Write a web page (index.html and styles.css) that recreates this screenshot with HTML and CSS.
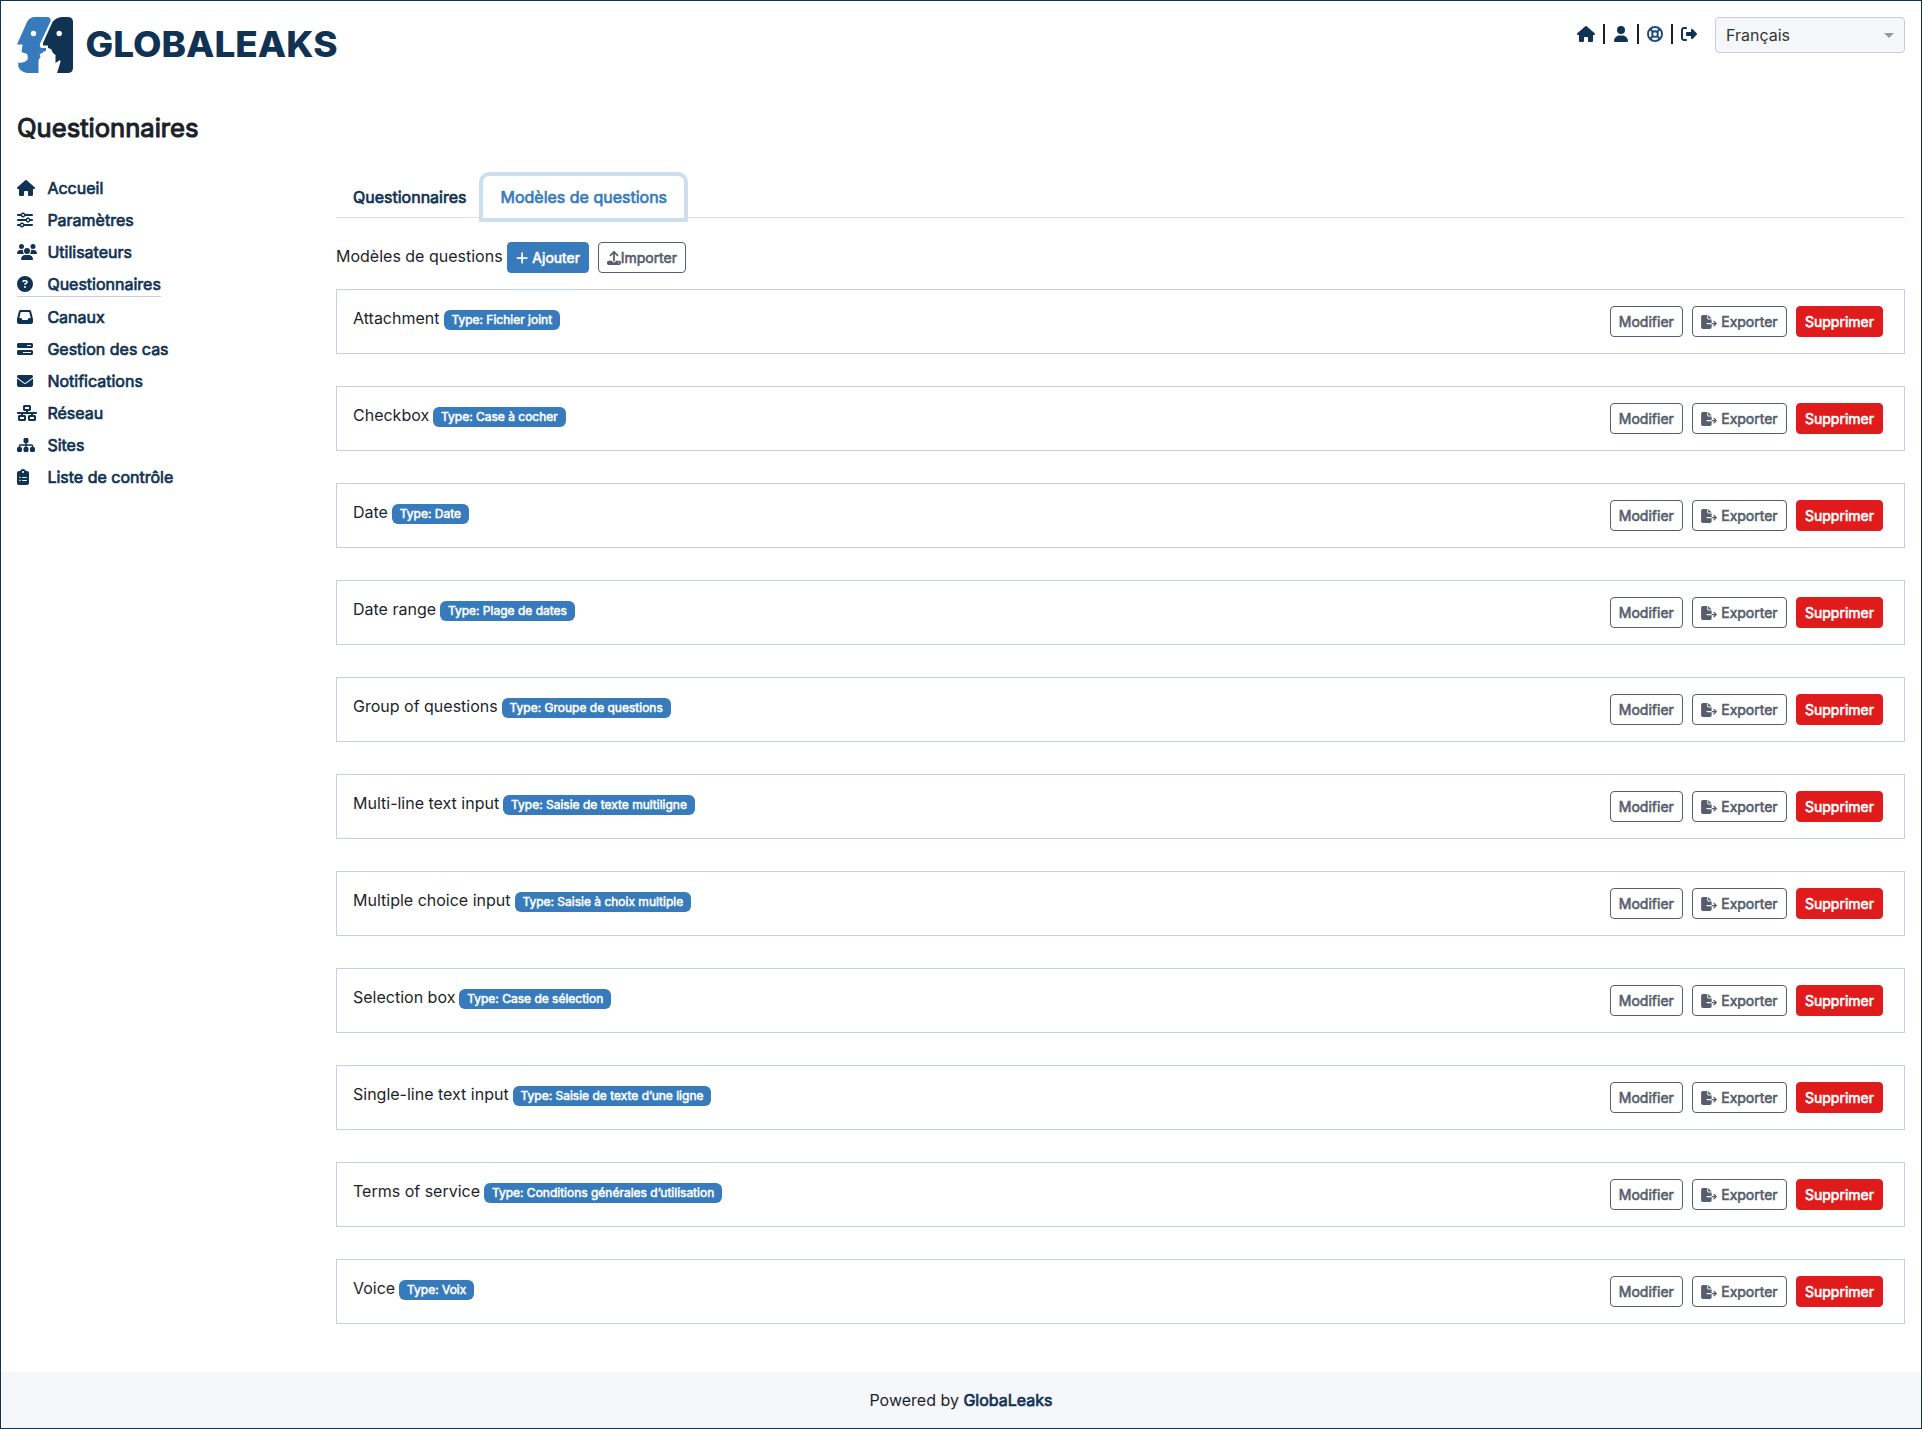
FILE: index.html
```html
<!DOCTYPE html>
<html lang="fr">
<head>
<meta charset="utf-8">
<title>GlobaLeaks</title>
<link rel="stylesheet" href="styles.css">
</head>
<body>
<svg class="sprite" aria-hidden="true">
<symbol id="house" viewBox="0 0 576 512"><path d="M575.8 255.5c0 18-15 32.1-32 32.1h-32l.7 160.2c0 2.7-.2 5.4-.5 8.1V472c0 22.1-17.9 40-40 40H456c-1.1 0-2.2 0-3.3-.1c-1.4 .1-2.8 .1-4.2 .1H416 392c-22.1 0-40-17.9-40-40V448 384c0-17.7-14.3-32-32-32H256c-17.7 0-32 14.3-32 32v64 24c0 22.1-17.9 40-40 40H160 128.1c-1.5 0-3-.1-4.5-.2c-1.2 .1-2.4 .2-3.6 .2H104c-22.1 0-40-17.9-40-40V360c0-.9 0-1.9 .1-2.8V287.6H32c-18 0-32-14-32-32.1c0-9 3-17 10-24L266.4 8c7-7 15-8 22-8s15 2 21 7L564.8 231.5c8 7 12 15 11 24z"/></symbol>
<symbol id="user" viewBox="0 0 448 512"><path d="M224 256A128 128 0 1 0 224 0a128 128 0 1 0 0 256zm-45.7 48C79.8 304 0 383.8 0 482.3C0 498.7 13.3 512 29.7 512H418.3c16.4 0 29.7-13.3 29.7-29.7C448 383.8 368.2 304 269.7 304H178.3z"/></symbol>
<symbol id="ring" viewBox="0 0 512 512"><g fill="none" stroke="currentColor" stroke-width="60"><circle cx="256" cy="256" r="226"/><circle cx="256" cy="256" r="90"/><path stroke-width="64" d="M96 96l98 98M416 96L318 194M96 416l98-98M416 416L318 318"/></g></symbol>
<symbol id="logout" viewBox="0 0 512 512"><path d="M377.9 105.9L500.7 228.7c7.2 7.2 11.3 17.1 11.3 27.3s-4.1 20.1-11.3 27.3L377.9 406.1c-6.4 6.4-15 9.9-24 9.9c-18.7 0-33.9-15.2-33.9-33.9l0-62.1-128 0c-17.7 0-32-14.3-32-32l0-64c0-17.7 14.3-32 32-32l128 0 0-62.1c0-18.7 15.2-33.9 33.9-33.9c9 0 17.6 3.6 24 9.9zM160 96L96 96c-17.7 0-32 14.3-32 32l0 256c0 17.7 14.3 32 32 32l64 0c17.7 0 32 14.3 32 32s-14.3 32-32 32l-64 0c-53 0-96-42.9-96-96L0 128C0 75 43 32 96 32l64 0c17.7 0 32 14.3 32 32s-14.3 32-32 32z"/></symbol>
<symbol id="sliders" viewBox="0 0 512 512"><path d="M0 416c0 17.7 14.3 32 32 32l54.7 0c12.3 28.3 40.5 48 73.3 48s61-19.7 73.3-48L480 448c17.7 0 32-14.3 32-32s-14.3-32-32-32l-246.7 0c-12.3-28.3-40.5-48-73.3-48s-61 19.7-73.3 48L32 384c-17.7 0-32 14.3-32 32zm128 0a32 32 0 1 1 64 0 32 32 0 1 1 -64 0zM320 256a32 32 0 1 1 64 0 32 32 0 1 1 -64 0zm32-80c-32.8 0-61 19.7-73.3 48L32 224c-17.7 0-32 14.3-32 32s14.3 32 32 32l246.7 0c12.3 28.3 40.5 48 73.3 48s61-19.7 73.3-48l54.7 0c17.7 0 32-14.3 32-32s-14.3-32-32-32l-54.7 0c-12.3-28.3-40.5-48-73.3-48zM192 128a32 32 0 1 1 0-64 32 32 0 1 1 0 64zm73.3-64C253 35.7 224.8 16 192 16s-61 19.7-73.3 48L32 64C14.3 64 0 78.3 0 96s14.3 32 32 32l86.7 0c12.3 28.3 40.5 48 73.3 48s61-19.7 73.3-48L480 128c17.7 0 32-14.3 32-32s-14.3-32-32-32L265.3 64z"/></symbol>
<symbol id="users" viewBox="0 0 640 512"><path d="M144 0a80 80 0 1 1 0 160A80 80 0 1 1 144 0zM512 0a80 80 0 1 1 0 160A80 80 0 1 1 512 0zM0 298.7C0 239.8 47.8 192 106.7 192h42.7c15.9 0 31 3.5 44.6 9.7c-1.3 7.2-1.9 14.7-1.9 22.3c0 38.2 16.8 72.5 43.3 96c-.2 0-.4 0-.7 0H21.3C9.6 320 0 310.4 0 298.7zM405.3 320c-.2 0-.4 0-.7 0c26.6-23.5 43.3-57.8 43.3-96c0-7.6-.7-15-1.9-22.3c13.6-6.3 28.7-9.7 44.6-9.7h42.7C592.2 192 640 239.8 640 298.7c0 11.8-9.6 21.3-21.3 21.3H405.3zM224 224a96 96 0 1 1 192 0 96 96 0 1 1 -192 0zM128 485.3C128 411.7 187.7 352 261.3 352H378.7C452.3 352 512 411.7 512 485.3c0 14.7-11.9 26.7-26.7 26.7H154.7c-14.7 0-26.7-11.9-26.7-26.7z"/></symbol>
<symbol id="question" viewBox="0 0 512 512"><path d="M256 512A256 256 0 1 0 256 0a256 256 0 1 0 0 512zM169.8 165.3c7.9-22.3 29.1-37.3 52.8-37.3h58.3c34.9 0 63.1 28.3 63.1 63.1c0 22.6-12.1 43.5-31.7 54.8L280 264.4c-.2 13-10.9 23.6-24 23.6c-13.3 0-24-10.7-24-24V250.5c0-8.6 4.6-16.5 12.1-20.8l44.3-25.4c4.7-2.7 7.6-7.7 7.6-13.1c0-8.4-6.8-15.1-15.1-15.1H222.6c-3.4 0-6.4 2.1-7.5 5.3l-.4 1.2c-4.4 12.5-18.2 19-30.6 14.6s-19-18.2-14.6-30.6l.4-1.2zM224 352a32 32 0 1 1 64 0 32 32 0 1 1 -64 0z"/></symbol>
<symbol id="inbox" viewBox="0 0 512 512"><path d="M121 32C91.6 32 66 52 58.9 80.5L1.9 308.4C.6 313.5 0 318.7 0 323.9V416c0 35.3 28.7 64 64 64H448c35.3 0 64-28.7 64-64V323.9c0-5.2-.6-10.4-1.9-15.5l-57-227.9C446 52 420.4 32 391 32H121zm0 64H391l48 192H387.8c-12.1 0-23.2 6.8-28.6 17.7l-14.3 28.6c-5.4 10.8-16.5 17.7-28.6 17.7H195.8c-12.1 0-23.2-6.8-28.6-17.7l-14.3-28.6c-5.4-10.8-16.5-17.7-28.6-17.7H73L121 96z"/></symbol>
<symbol id="bars" viewBox="0 0 512 512"><path d="M448 160H320V128H448v32zM48 64C21.5 64 0 85.5 0 112v64c0 26.5 21.5 48 48 48H464c26.5 0 48-21.5 48-48V112c0-26.5-21.5-48-48-48H48zM448 352v32H192V352H448zM48 288c-26.5 0-48 21.5-48 48v64c0 26.5 21.5 48 48 48H464c26.5 0 48-21.5 48-48V336c0-26.5-21.5-48-48-48H48z"/></symbol>
<symbol id="envelope" viewBox="0 0 512 512"><path d="M48 64C21.5 64 0 85.5 0 112c0 15.1 7.1 29.3 19.2 38.4L236.8 313.6c11.4 8.5 27 8.5 38.4 0L492.8 150.4c12.1-9.1 19.2-23.3 19.2-38.4c0-26.5-21.5-48-48-48H48zM0 176V384c0 35.3 28.7 64 64 64H448c35.3 0 64-28.7 64-64V176L294.4 339.2c-22.8 17.1-54 17.1-76.8 0L0 176z"/></symbol>
<symbol id="network" viewBox="0 0 640 512"><path d="M256 64H384v64H256V64zM240 0c-26.5 0-48 21.5-48 48v96c0 26.5 21.5 48 48 48h48v32H32c-17.7 0-32 14.3-32 32s14.3 32 32 32h96v32H80c-26.5 0-48 21.5-48 48v96c0 26.5 21.5 48 48 48H240c26.5 0 48-21.5 48-48V368c0-26.5-21.5-48-48-48H192V288H448v32H400c-26.5 0-48 21.5-48 48v96c0 26.5 21.5 48 48 48H560c26.5 0 48-21.5 48-48V368c0-26.5-21.5-48-48-48H512V288h96c17.7 0 32-14.3 32-32s-14.3-32-32-32H352V192h48c26.5 0 48-21.5 48-48V48c0-26.5-21.5-48-48-48H240zM96 448V384H224v64H96zm320-64H544v64H416V384z"/></symbol>
<symbol id="sitemap" viewBox="0 0 576 512"><path d="M208 80c0-26.5 21.5-48 48-48h64c26.5 0 48 21.5 48 48v64c0 26.5-21.5 48-48 48h-8v40H464c30.9 0 56 25.1 56 56v32h8c26.5 0 48 21.5 48 48v64c0 26.5-21.5 48-48 48H464c-26.5 0-48-21.5-48-48V368c0-26.5 21.5-48 48-48h8V288c0-4.4-3.6-8-8-8H312v40h8c26.5 0 48 21.5 48 48v64c0 26.5-21.5 48-48 48H256c-26.5 0-48-21.5-48-48V368c0-26.5 21.5-48 48-48h8V280H112c-4.4 0-8 3.6-8 8v32h8c26.5 0 48 21.5 48 48v64c0 26.5-21.5 48-48 48H48c-26.5 0-48-21.5-48-48V368c0-26.5 21.5-48 48-48h8V288c0-30.9 25.1-56 56-56H264V192h-8c-26.5 0-48-21.5-48-48V80z"/></symbol>
<symbol id="clipboard" viewBox="0 0 384 512"><path d="M192 0c-41.8 0-77.4 26.7-90.5 64H64C28.7 64 0 92.7 0 128V448c0 35.3 28.7 64 64 64H320c35.3 0 64-28.7 64-64V128c0-35.3-28.7-64-64-64H282.5C269.4 26.7 233.8 0 192 0zm0 64a32 32 0 1 1 0 64 32 32 0 1 1 0-64zM72 272a24 24 0 1 1 48 0 24 24 0 1 1 -48 0zm104-16H304c8.8 0 16 7.2 16 16s-7.2 16-16 16H176c-8.8 0-16-7.2-16-16s7.2-16 16-16zM72 368a24 24 0 1 1 48 0 24 24 0 1 1 -48 0zm88 0c0-8.8 7.2-16 16-16H304c8.8 0 16 7.2 16 16s-7.2 16-16 16H176c-8.8 0-16-7.2-16-16z"/></symbol>
<symbol id="plus" viewBox="0 0 448 512"><path d="M256 80c0-17.7-14.3-32-32-32s-32 14.3-32 32V224H48c-17.7 0-32 14.3-32 32s14.3 32 32 32H192V432c0 17.7 14.3 32 32 32s32-14.3 32-32V288H400c17.7 0 32-14.3 32-32s-14.3-32-32-32H256V80z"/></symbol>
<symbol id="upload" viewBox="0 0 512 512"><path d="M288 109.3V352c0 17.7-14.3 32-32 32s-32-14.3-32-32V109.3l-73.4 73.4c-12.5 12.5-32.8 12.5-45.3 0s-12.5-32.8 0-45.3l128-128c12.5-12.5 32.8-12.5 45.3 0l128 128c12.5 12.5 12.5 32.8 0 45.3s-32.8 12.5-45.3 0L288 109.3zM64 352H192c0 35.3 28.7 64 64 64s64-28.7 64-64H448c35.3 0 64 28.7 64 64v32c0 35.3-28.7 64-64 64H64c-35.3 0-64-28.7-64-64V416c0-35.3 28.7-64 64-64zM432 456a24 24 0 1 0 0-48 24 24 0 1 0 0 48z"/></symbol>
<symbol id="export" viewBox="0 0 576 512"><path d="M0 64C0 28.7 28.7 0 64 0H224V128c0 17.7 14.3 32 32 32H384V288H216c-13.3 0-24 10.7-24 24s10.7 24 24 24H384V448c0 35.3-28.7 64-64 64H64c-35.3 0-64-28.7-64-64V64zM384 336V288H494.1l-39-39c-9.4-9.4-9.4-24.6 0-33.9s24.6-9.4 33.9 0l80 80c9.4 9.4 9.4 24.6 0 33.9l-80 80c-9.4 9.4-24.6 9.4-33.9 0s-9.4-24.6 0-33.9l39-39H384zm0-208H256V0L384 128z"/></symbol>
</svg>
<header class="header">
<svg class="logo" viewBox="0 0 324 56">
<path fill="#377bbc" d="M17 0h12.500q5 0 4 4.500L23.300 26q-1.500 3.500 1.200 5h4.500v3q-3 0-3.500 2l-3 1 1 3-2 3v13H9.500Q2 54 1.300 49v-3.500q6 1 9-2.500 1.500-4-1-6.500l-4-1q-1.500-1.500-.3-3.500l.5-4.500H0L10 5Q12.500 .5 17 0z"/>
<path fill="#103253" d="M45 0h5.500q5.500 0 5.500 5v46q0 5-5.500 5H40l3.500-11-.5-2-4.500 3v-8l-2.500-2-2-4-3-1v-2.500h-5v-2.500L35.500 5Q39 .5 45 0z"/>
<circle cx="16.500" cy="16.500" r="2.700" fill="#fff"/><circle cx="42.200" cy="16.500" r="2.700" fill="#fff"/>
<text class="wordmark" x="68.500" y="40.200" textLength="252" lengthAdjust="spacingAndGlyphs">GLOBALEAKS</text>
</svg>
<div class="tools">
<svg class="icon"><use href="#house"/></svg><i class="bar"></i><svg class="icon user"><use href="#user"/></svg><i class="bar"></i><svg class="icon ring"><use href="#ring"/></svg><i class="bar"></i><svg class="icon out"><use href="#logout"/></svg>
<div class="select"><span>Français</span><i class="caret"></i></div>
</div>
</header>
<h1 class="title">Questionnaires</h1>
<div class="columns">
<nav class="nav">
<a><svg class="icon w18"><use href="#house"/></svg>Accueil</a>
<a><svg class="icon w16"><use href="#sliders"/></svg>Paramètres</a>
<a><svg class="icon w20"><use href="#users"/></svg>Utilisateurs</a>
<a class="current"><svg class="icon w16"><use href="#question"/></svg>Questionnaires</a>
<a><svg class="icon w16"><use href="#inbox"/></svg>Canaux</a>
<a><svg class="icon w16"><use href="#bars"/></svg>Gestion des cas</a>
<a><svg class="icon w16"><use href="#envelope"/></svg>Notifications</a>
<a><svg class="icon w20"><use href="#network"/></svg>Réseau</a>
<a><svg class="icon w18"><use href="#sitemap"/></svg>Sites</a>
<a><svg class="icon w12"><use href="#clipboard"/></svg>Liste de contrôle</a>
</nav>
<main class="main">
<div class="tabs"><a class="tab">Questionnaires</a><a class="tab active">Modèles de questions</a></div>
<div class="actions"><span class="label">Modèles de questions</span><a class="btn primary"><svg class="bi plus"><use href="#plus"/></svg>Ajouter</a><a class="btn outline"><svg class="bi up"><use href="#upload"/></svg>Importer</a></div>
<div class="list">
<div class="card"><div>Attachment <span class="badge">Type: Fichier joint</span></div><div class="buttons"><a class="btn outline">Modifier</a><a class="btn outline"><svg class="bi export"><use href="#export"/></svg>Exporter</a><a class="btn danger">Supprimer</a></div></div>
<div class="card"><div>Checkbox <span class="badge">Type: Case à cocher</span></div><div class="buttons"><a class="btn outline">Modifier</a><a class="btn outline"><svg class="bi export"><use href="#export"/></svg>Exporter</a><a class="btn danger">Supprimer</a></div></div>
<div class="card"><div>Date <span class="badge">Type: Date</span></div><div class="buttons"><a class="btn outline">Modifier</a><a class="btn outline"><svg class="bi export"><use href="#export"/></svg>Exporter</a><a class="btn danger">Supprimer</a></div></div>
<div class="card"><div>Date range <span class="badge">Type: Plage de dates</span></div><div class="buttons"><a class="btn outline">Modifier</a><a class="btn outline"><svg class="bi export"><use href="#export"/></svg>Exporter</a><a class="btn danger">Supprimer</a></div></div>
<div class="card"><div>Group of questions <span class="badge">Type: Groupe de questions</span></div><div class="buttons"><a class="btn outline">Modifier</a><a class="btn outline"><svg class="bi export"><use href="#export"/></svg>Exporter</a><a class="btn danger">Supprimer</a></div></div>
<div class="card"><div>Multi-line text input <span class="badge">Type: Saisie de texte multiligne</span></div><div class="buttons"><a class="btn outline">Modifier</a><a class="btn outline"><svg class="bi export"><use href="#export"/></svg>Exporter</a><a class="btn danger">Supprimer</a></div></div>
<div class="card"><div>Multiple choice input <span class="badge">Type: Saisie à choix multiple</span></div><div class="buttons"><a class="btn outline">Modifier</a><a class="btn outline"><svg class="bi export"><use href="#export"/></svg>Exporter</a><a class="btn danger">Supprimer</a></div></div>
<div class="card"><div>Selection box <span class="badge">Type: Case de sélection</span></div><div class="buttons"><a class="btn outline">Modifier</a><a class="btn outline"><svg class="bi export"><use href="#export"/></svg>Exporter</a><a class="btn danger">Supprimer</a></div></div>
<div class="card"><div>Single-line text input <span class="badge">Type: Saisie de texte d’une ligne</span></div><div class="buttons"><a class="btn outline">Modifier</a><a class="btn outline"><svg class="bi export"><use href="#export"/></svg>Exporter</a><a class="btn danger">Supprimer</a></div></div>
<div class="card"><div>Terms of service <span class="badge">Type: Conditions générales d’utilisation</span></div><div class="buttons"><a class="btn outline">Modifier</a><a class="btn outline"><svg class="bi export"><use href="#export"/></svg>Exporter</a><a class="btn danger">Supprimer</a></div></div>
<div class="card"><div>Voice <span class="badge">Type: Voix</span></div><div class="buttons"><a class="btn outline">Modifier</a><a class="btn outline"><svg class="bi export"><use href="#export"/></svg>Exporter</a><a class="btn danger">Supprimer</a></div></div>
</div>
</main>
</div>
<footer class="footer"><span>Powered by <b>GlobaLeaks</b></span></footer>
</body>
</html>
```
FILE: styles.css
```css
* { box-sizing: border-box; }
body {
  margin: 0; height: 1429px; border: 1px solid #103253; background: #fff;
  display: flex; flex-direction: column; overflow: hidden;
  font: 400 16px/24px Inter, "Liberation Sans", sans-serif; color: #1d1f2a;
}
svg { fill: currentColor; }
.sprite { display: none; }
.header { display: flex; justify-content: space-between; align-items: flex-start; padding: 16px 16px 0; height: 107px; }
.logo { width: 324px; height: 56px; }
.wordmark { font: 800 35px Inter, sans-serif; fill: #103253; }
.tools { display: flex; align-items: flex-start; color: #103253; }
.icon { width: 18px; height: 16px; flex: none; }
.tools .icon { margin-top: 9px; }
.tools .user { width: 14px; margin-left: 1px; margin-right: 1px; }
.tools .ring { width: 16px; color: #1d4c7c; }
.tools .out { width: 16px; }
.bar { width: 2px; height: 20px; background: #1d1f2a; margin: 7px 8px 0; }
.select {
  width: 190px; height: 36px; margin-left: 18px; padding: 0 10px; border: 1px solid #ccc; border-radius: 4px;
  background: #f5f7fb; color: #333; display: flex; align-items: center; justify-content: space-between;
}
.caret { border: 5px solid transparent; border-top-color: #999; border-bottom: 0; }
.title, .nav, .tab, .btn, .badge, .footer b { font-weight: 400; -webkit-text-stroke: .043em currentColor; }
.title { margin: 0; padding: 4px 16px 0; height: 64px; font-size: 25.600px; line-height: 32px; }
.columns { display: flex; padding: 0 16px; }
.nav { width: 319px; display: flex; flex-direction: column; align-items: flex-start; gap: 8px; padding-top: 4px; color: #103253; }
.nav a { display: flex; align-items: center; height: 24px; }
.nav .current { height: 25px; border-bottom: 1px solid #c5cfe3; }
.w12 { width: 12px; margin-right: 18.400px; }
.w16 { width: 16px; margin-right: 14.400px; }
.w18 { width: 18px; margin-right: 12.400px; }
.w20 { width: 20px; margin-right: 10.400px; }
.main { flex: 1; }
.tabs { display: flex; height: 46px; padding-top: 4px; border-bottom: 1px solid #d8e0ea; color: #103253; }
.tab { padding: 9px 17px; height: 42px; }
.active { color: #377bbc; background: #fff; border-radius: 6px 6px 0 0; box-shadow: 0 0 0 4px #cddeee; }
.actions { display: flex; padding-top: 24px; height: 71px; }
.label { margin-top: 2px; margin-right: 4px; }
.btn { display: inline-flex; align-items: center; height: 31px; padding: 0 8px; border: 1px solid; border-radius: 4px; font-size: 14px; line-height: 21px; }
.primary { background: #377bbc; border-color: #377bbc; color: #fff; margin-right: 9px; }
.outline { color: #565d6d; background: #fff; }
.danger { background: #e01b1b; border-color: #e01b1b; color: #fff; }
.bi { height: 14px; flex: none; }
.plus { width: 12.250px; margin-right: 4.500px; }
.up { width: 14px; margin-right: -.3px; }
.export { width: 16px; margin-right: 4px; }
.list { display: flex; flex-direction: column; gap: 32px; }
.card { display: flex; justify-content: space-between; height: 65px; padding: 16px 21px 0 16px; border: 1px solid #c5cfe0; }
.buttons { display: flex; gap: 9.400px; }
.badge { display: inline-block; margin-left: -.4px; padding: 4.200px 7.800px; border-radius: 6px; background: #377bbc; color: #fff; font-size: 12px; line-height: 12px; }
.footer { margin-top: auto; height: 56px; background: #f5f7fb; display: flex; justify-content: center; align-items: center; }
.footer b { color: #103253; }
```
